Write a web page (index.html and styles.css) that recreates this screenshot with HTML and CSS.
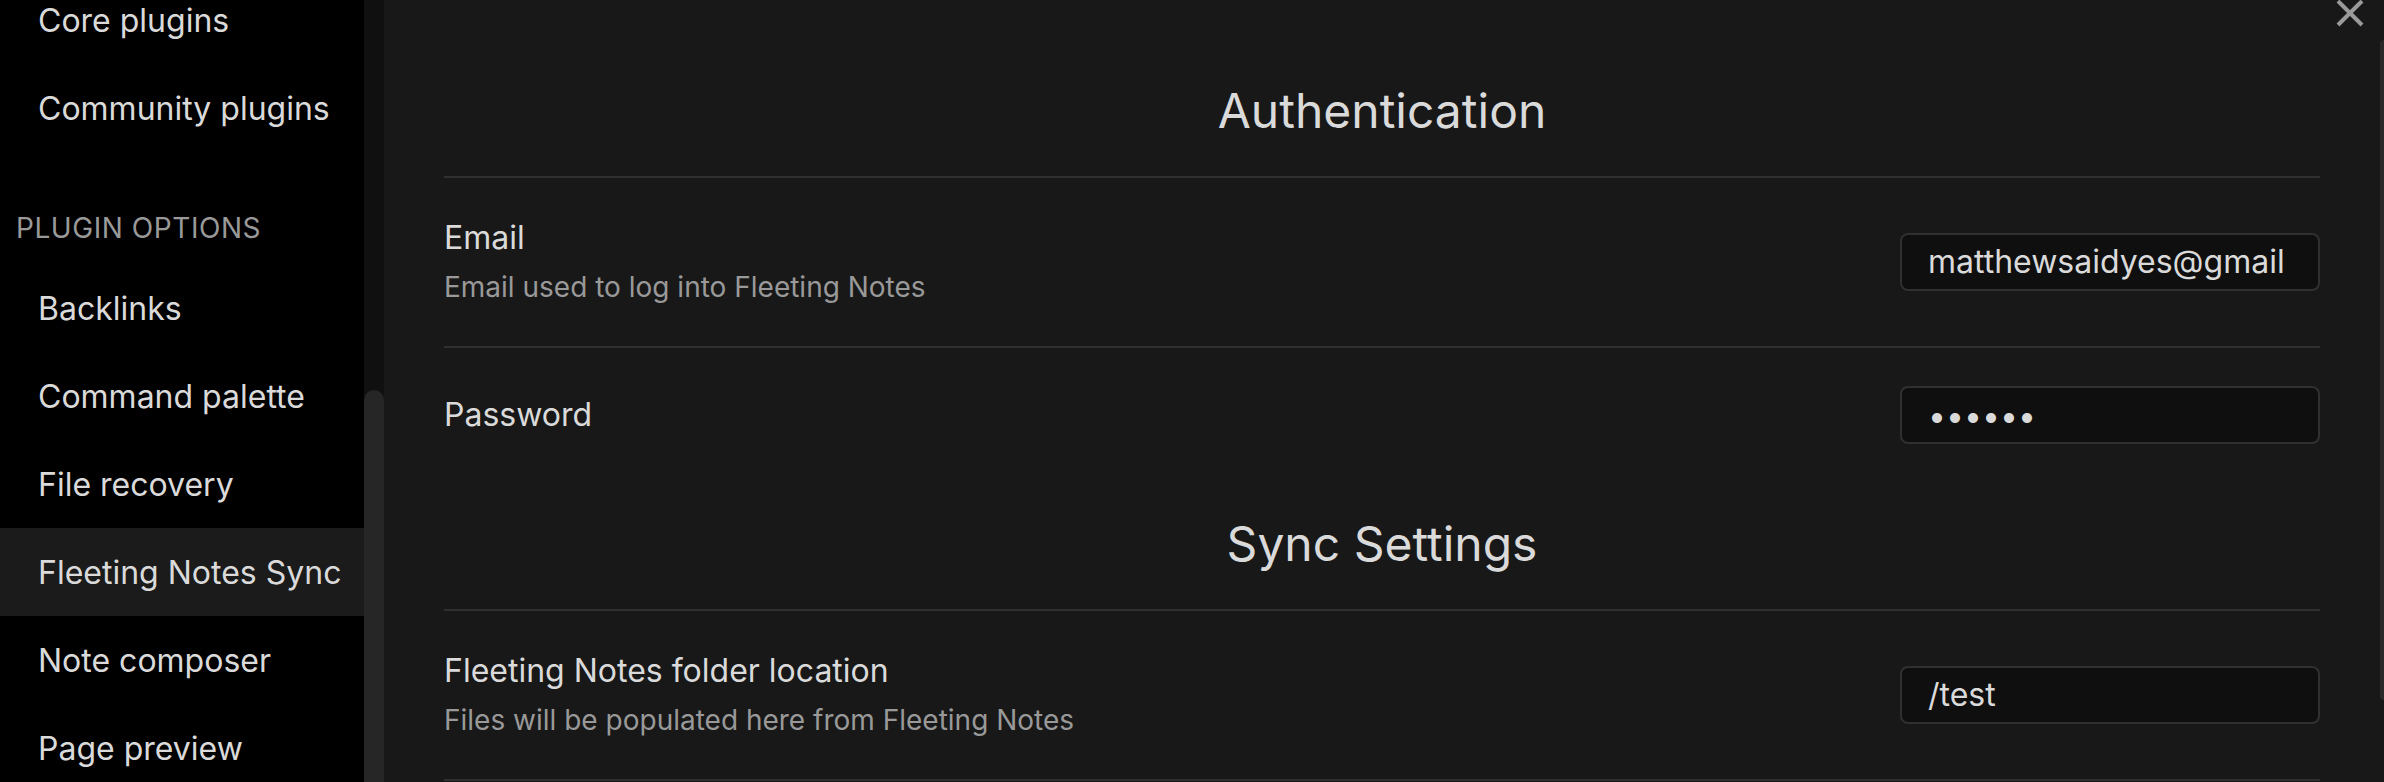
FILE: index.html
```html
<!DOCTYPE html>
<html lang="en">
<head>
<meta charset="utf-8">
<title>Fleeting Notes Sync settings</title>
<link rel="stylesheet" href="styles.css">
</head>
<body>
<div class="settings">
  <aside class="sidebar">
    <nav class="nav">
      <div class="nav-item">Core plugins</div>
      <div class="nav-item">Community plugins</div>
      <div class="nav-group-title">PLUGIN OPTIONS</div>
      <div class="nav-item">Backlinks</div>
      <div class="nav-item">Command palette</div>
      <div class="nav-item">File recovery</div>
      <div class="nav-item is-active">Fleeting Notes Sync</div>
      <div class="nav-item">Note composer</div>
      <div class="nav-item">Page preview</div>
    </nav>
    <div class="scroll-track"><div class="scroll-thumb"></div></div>
  </aside>
  <main class="content">
    <div class="content-inner">
      <h2 class="section-heading">Authentication</h2>
      <div class="setting-item">
        <div class="setting-info">
          <div class="setting-name">Email</div>
          <div class="setting-desc">Email used to log into Fleeting Notes</div>
        </div>
        <input class="text-input text-input-email" type="text" value="matthewsaidyes@gmail.com">
      </div>
      <div class="setting-item">
        <div class="setting-info">
          <div class="setting-name">Password</div>
        </div>
        <input class="text-input" type="password" value="secret">
      </div>
      <h2 class="section-heading">Sync Settings</h2>
      <div class="setting-item">
        <div class="setting-info">
          <div class="setting-name">Fleeting Notes folder location</div>
          <div class="setting-desc">Files will be populated here from Fleeting Notes</div>
        </div>
        <input class="text-input" type="text" value="/test">
      </div>
      <div class="setting-item setting-item-end"></div>
    </div>
    <div class="content-scroll"><div class="content-thumb"></div></div>
  </main>
  <button class="close-btn" aria-label="Close">
    <svg viewBox="0 0 28 28" width="28" height="28"><path d="M2 1 L26 25 M26 1 L2 25" stroke="#9a9a9a" stroke-width="4" fill="none"/></svg>
  </button>
</div>
</body>
</html>
```
FILE: styles.css
```css
html, body {
  margin: 0;
  padding: 0;
  background: #181818;
  height: 782px;
  overflow: hidden;
}
body {
  font-family: Inter, "Noto Sans", sans-serif;
  color: #dadada;
}
.settings {
  display: flex;
  height: 782px;
  overflow: hidden;
  position: relative;
}
.sidebar {
  display: flex;
  width: 384px;
  flex: none;
  background: #000;
}
.nav {
  width: 364px;
  margin-top: -24px;
}
.nav-item {
  height: 88px;
  display: flex;
  align-items: center;
  padding-left: 38px;
  font-size: 32px;
  color: #dadada;
  white-space: nowrap;
}
.nav-item.is-active {
  background: #1b1b1b;
}
.nav-group-title {
  height: 112px;
  box-sizing: border-box;
  padding-top: 62px;
  padding-left: 16px;
  font-size: 28px;
  line-height: 1;
  color: #999;
  letter-spacing: 0.02em;
}
.scroll-track {
  width: 20px;
  background: #101010;
  padding-top: 390px;
  box-sizing: border-box;
}
.scroll-thumb {
  height: 100%;
  background: #262626;
  border-radius: 10px 10px 0 0;
}
.content {
  flex: 1;
  display: flex;
  background: #181818;
}
.content-inner {
  flex: 1;
  padding: 50px 60px 0 60px;
}
.content-scroll {
  width: 4px;
  padding-top: 40px;
}
.content-thumb {
  height: 660px;
  background: #2a2a2a;
  border-radius: 4px 0 0 4px;
}
.section-heading {
  margin: 31px 0 35px;
  font-size: 48px;
  line-height: 60px;
  font-weight: 400;
  text-align: center;
  color: #dadada;
}
.setting-item {
  display: flex;
  align-items: center;
  justify-content: space-between;
  border-top: 2px solid #303030;
  padding: 38px 0 39px;
}
.setting-item-end {
  height: 40px;
}
.setting-name {
  font-size: 32px;
  line-height: 44px;
  color: #dadada;
}
.setting-desc {
  margin-top: 8px;
  font-size: 28px;
  line-height: 39px;
  color: #999;
}
.text-input {
  width: 420px;
  height: 58px;
  box-sizing: border-box;
  padding: 0 26px;
  border: 2px solid #303030;
  border-radius: 8px;
  background: #0f0f0f;
  color: #dadada;
  font-family: Inter, "Noto Sans", sans-serif;
  font-size: 32px;
  outline: none;
}
.text-input-email {
  padding-right: 34px;
}
.close-btn {
  position: absolute;
  top: 0;
  left: 2336px;
  width: 28px;
  height: 28px;
  padding: 0;
  border: 0;
  background: transparent;
}
.close-btn svg {
  display: block;
}
```
